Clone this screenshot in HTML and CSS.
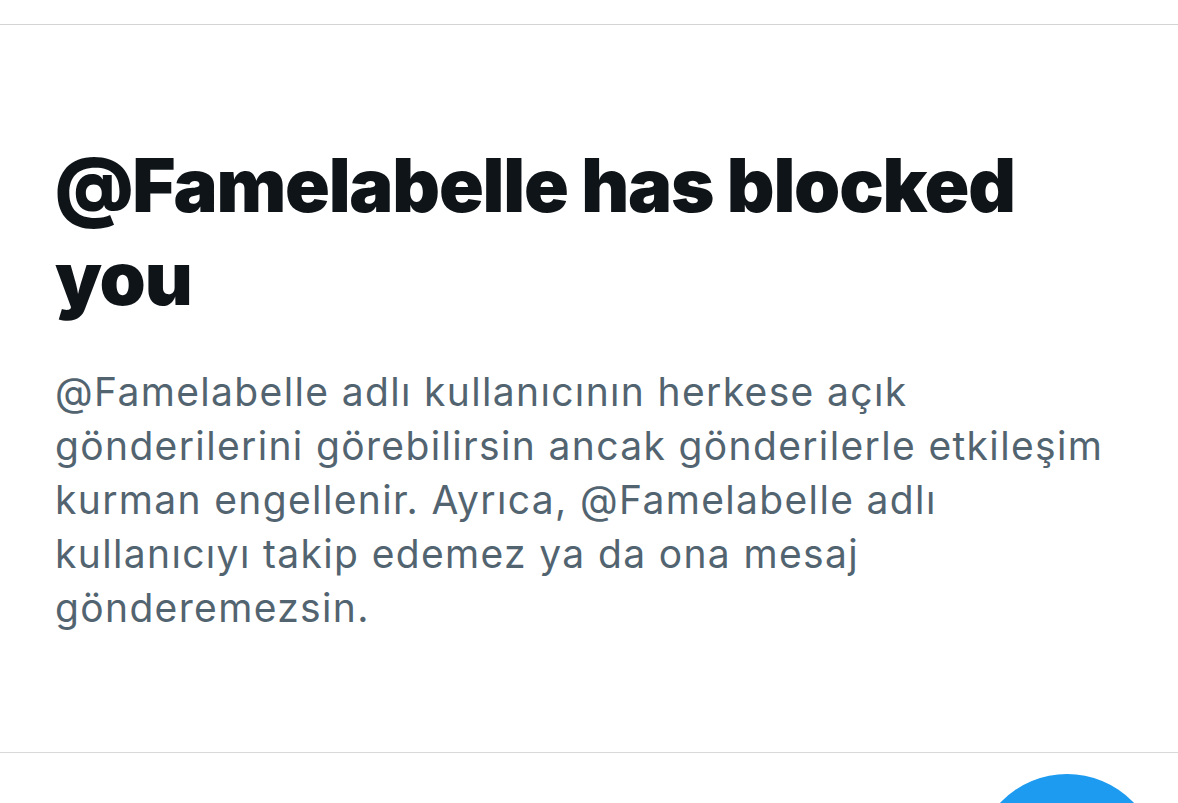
FILE: index.html
```html
<!DOCTYPE html>
<html lang="tr">
<head>
<meta charset="utf-8">
<link rel="stylesheet" href="styles.css">
</head>
<body>
<div class="page">
  <div class="topbar"></div>
  <section class="blocked">
    <h1 class="title">@Famelabelle has blocked you</h1>
    <p class="desc">@Famelabelle adlı kullanıcının herkese açık gönderilerini görebilirsin ancak gönderilerle etkileşim kurman engellenir. Ayrıca, @Famelabelle adlı kullanıcıyı takip edemez ya da ona mesaj gönderemezsin.</p>
  </section>
  <div class="below"></div>
  <div class="fab"></div>
</div>
</body>
</html>
```

FILE: styles.css
```css
html, body {
  margin: 0;
  padding: 0;
  background: #ffffff;
}
.page {
  position: relative;
  width: 1178px;
  height: 803px;
  overflow: hidden;
  font-family: Inter, "Liberation Sans", sans-serif;
}
.topbar {
  height: 24px;
  border-bottom: 1px solid #d4d4d4;
}
.blocked {
  height: 728px;
  box-sizing: border-box;
  padding: 114px 55px 0 55px;
  border-bottom: 1px solid #d9d9d9;
}
.title {
  margin: 0;
  font-size: 74px;
  line-height: 93px;
  font-weight: 900;
  color: #0f1419;
  letter-spacing: -1.2px;
}
.desc {
  margin: 40px 0 0 0;
  font-size: 39px;
  line-height: 54px;
  font-weight: 400;
  color: #536471;
  letter-spacing: 1.35px;
}
.fab {
  position: absolute;
  left: 975px;
  top: 774px;
  width: 184px;
  height: 184px;
  border-radius: 50%;
  background: #1d9bf0;
}
```
